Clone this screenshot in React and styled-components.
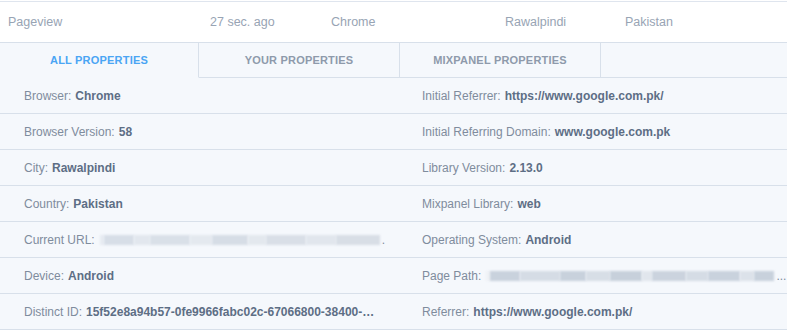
import React from 'react';
import styled, { createGlobalStyle } from 'styled-components';

const GlobalStyle = createGlobalStyle`
  html, body {
    margin: 0;
    padding: 0;
    background: #ffffff;
    font-family: "Liberation Sans", Arial, sans-serif;
  }
`;

const Wrapper = styled.div`
  width: 787px;
  height: 330px;
  overflow: hidden;
  border-top: 1px solid #dfe5ee;
  margin-top: 1px;
`;

const EventRow = styled.div`
  display: flex;
  align-items: center;
  height: 40px;
  background: #ffffff;
  border-bottom: 1px solid #d8e0ea;
  font-size: 12.5px;
  color: #98a4b4;
`;

const EventCell = styled.div`
  box-sizing: border-box;
  width: ${p => p.w}px;
  padding-left: ${p => p.pad || 0}px;
  flex-shrink: 0;
`;

const Panel = styled.div`
  background-color: #f5f8fc;
  background-image: radial-gradient(#e8edf4 0.6px, transparent 0.7px);
  background-size: 6px 6px;
`;

const Tabs = styled.div`
  display: flex;
  height: 35px;
`;

const Tab = styled.div`
  width: ${p => p.w}px;
  display: flex;
  align-items: center;
  justify-content: center;
  font-size: 11px;
  font-weight: 700;
  letter-spacing: 0.2px;
  color: ${p => (p.active ? '#4aa5f4' : '#8e9aab')};
  border-bottom: ${p => (p.active ? '1px solid transparent' : '1px solid #d8e0ea')};
  border-right: 1px solid #d8e0ea;
  box-sizing: border-box;
`;

const TabFill = styled.div`
  flex: 1;
  border-bottom: 1px solid #d8e0ea;
`;

const Grid = styled.div`
  display: grid;
  grid-template-columns: 398px 389px;
`;

const Prop = styled.div`
  height: 35px;
  border-bottom: 1px solid #d8e0ea;
  display: flex;
  align-items: center;
  padding-left: 24px;
  font-size: 12px;
  color: #7f8c9d;
  white-space: nowrap;
  overflow: hidden;
`;

const Value = styled.b`
  color: #5d6e85;
  font-weight: 700;
  margin-left: 4px;
`;

const Blur = styled.span`
  display: inline-flex;
  align-items: center;
  margin-left: 5px;
`;

const BlurBlock = styled.span`
  display: inline-block;
  height: 10px;
  width: ${p => p.w}px;
  background: ${p => p.c};
  filter: blur(0.8px);
`;

const Tail = styled.span`
  color: #7f8c9d;
  margin-left: 2px;
`;

const urlBlocks = [
  [4, '#e6ebf1'], [30, '#d7dee7'], [16, '#e2e7ee'], [40, '#d9e0e8'], [22, '#e4e9ef'],
  [36, '#d6dde6'], [18, '#e3e8ee'], [40, '#d9dfe7'], [30, '#e1e6ed'], [44, '#d8dee6'],
];

const pathBlocks = [
  [4, '#eef1f5'], [30, '#c9d2dd'], [40, '#d5dce5'], [26, '#c8d1dc'], [24, '#d7dee6'],
  [32, '#c7d0db'], [10, '#e1e6ed'], [34, '#cbd3de'], [22, '#d5dce5'], [32, '#c9d2dd'],
  [14, '#dce2ea'], [20, '#c8d1dc'],
];

const Blurred = ({ blocks, tail }) => (
  <Blur>
    {blocks.map(([w, c], i) => (
      <BlurBlock key={i} w={w} c={c} />
    ))}
    <Tail>{tail}</Tail>
  </Blur>
);

const left = [
  ['Browser:', 'Chrome'],
  ['Browser Version:', '58'],
  ['City:', 'Rawalpindi'],
  ['Country:', 'Pakistan'],
  ['Current URL:', null, urlBlocks, '.'],
  ['Device:', 'Android'],
  ['Distinct ID:', '15f52e8a94b57-0fe9966fabc02c-67066800-38400-…'],
];

const right = [
  ['Initial Referrer:', 'https://www.google.com.pk/'],
  ['Initial Referring Domain:', 'www.google.com.pk'],
  ['Library Version:', '2.13.0'],
  ['Mixpanel Library:', 'web'],
  ['Operating System:', 'Android'],
  ['Page Path:', null, pathBlocks, '...'],
  ['Referrer:', 'https://www.google.com.pk/'],
];

const renderProp = ([label, value, blocks, tail]) => (
  <>
    {label}
    {value ? <Value>{value}</Value> : <Blurred blocks={blocks} tail={tail} />}
  </>
);

const App = () => (
  <>
    <GlobalStyle />
    <Wrapper>
      <EventRow>
        <EventCell w={210} pad={8}>Pageview</EventCell>
        <EventCell w={121}>27 sec. ago</EventCell>
        <EventCell w={174}>Chrome</EventCell>
        <EventCell w={120}>Rawalpindi</EventCell>
        <EventCell w={100}>Pakistan</EventCell>
      </EventRow>
      <Panel>
        <Tabs>
          <Tab w={199} active>ALL PROPERTIES</Tab>
          <Tab w={201}>YOUR PROPERTIES</Tab>
          <Tab w={201}>MIXPANEL PROPERTIES</Tab>
          <TabFill />
        </Tabs>
        <Grid>
          {left.map((l, i) => (
            <React.Fragment key={i}>
              <Prop>{renderProp(l)}</Prop>
              <Prop>{renderProp(right[i])}</Prop>
            </React.Fragment>
          ))}
        </Grid>
      </Panel>
    </Wrapper>
  </>
);

export default App;
